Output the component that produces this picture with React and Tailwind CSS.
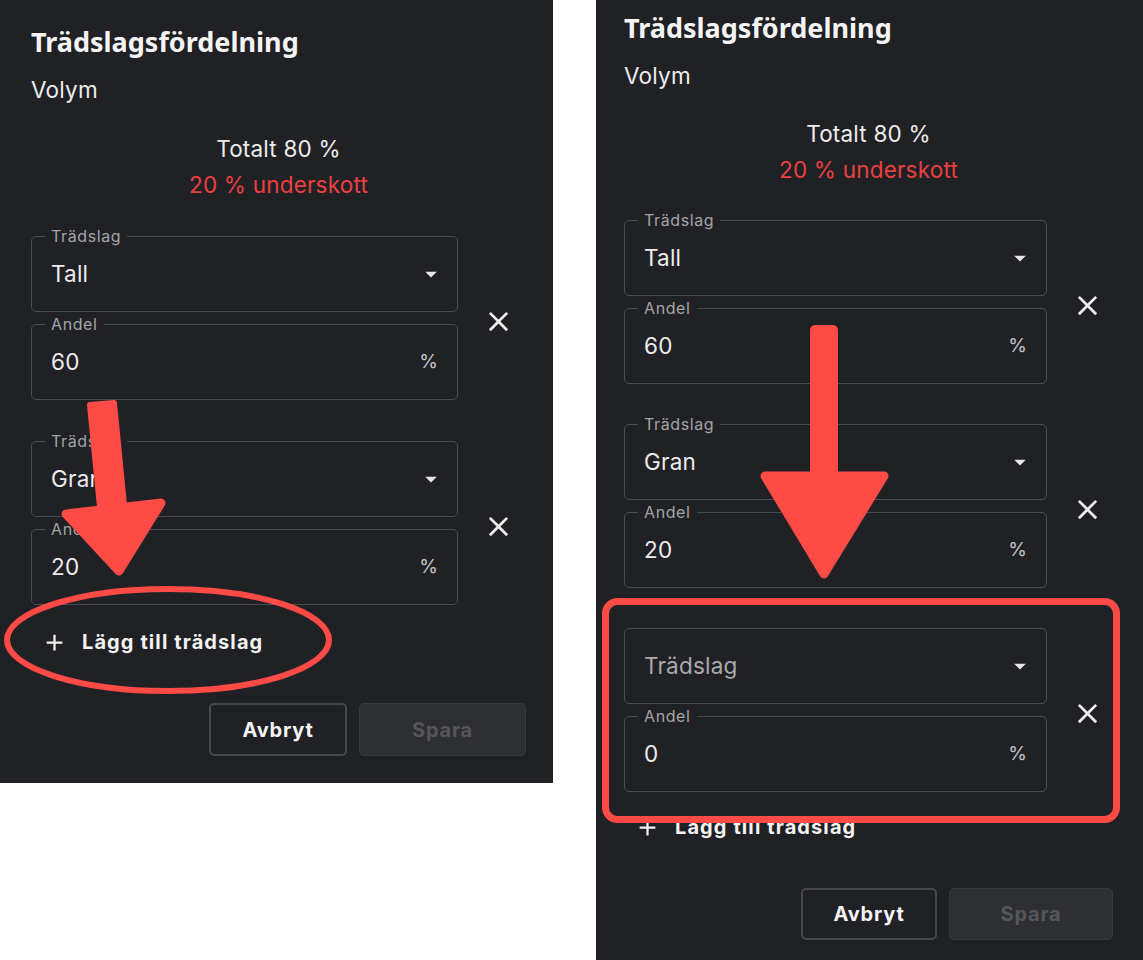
import React from "react";

const V = {
  left: {
    panel: "w-[553px] h-[783px] pl-[31px] pr-[27px] pt-[25px]",
    field: "w-[427px]",
    rows: "gap-[41px]",
    totalMt: "mt-[27px]",
    rowsMt: "mt-[33px]",
    addMt: "mt-[23px]",
    btnMt: "mt-[47px]",
    avbryt: "w-[138px] h-[53px]",
    spara: "w-[167px] h-[53px]",
  },
  right: {
    panel: "w-[547px] h-[960px] pl-[28px] pr-[30px] pt-[11px]",
    field: "w-[423px]",
    rows: "gap-[40px]",
    totalMt: "mt-[26px]",
    rowsMt: "mt-[32px]",
    addMt: "mt-[21px]",
    btnMt: "mt-[47px]",
    avbryt: "w-[136px] h-[52px]",
    spara: "w-[164px] h-[52px]",
  },
};

function DropIcon() {
  return (
    <svg viewBox="0 0 24 24" className="w-[28px] h-[28px] fill-[#e6e6e6]">
      <path d="M7 10l5 5 5-5z" />
    </svg>
  );
}

function CloseIcon() {
  return (
    <svg viewBox="0 0 24 24" className="w-[33px] h-[33px] fill-[#ececec]">
      <path d="M19 6.41 17.59 5 12 10.59 6.41 5 5 6.41 10.59 12 5 17.59 6.41 19 12 13.41 17.59 19 19 17.59 13.41 12z" />
    </svg>
  );
}

function AddIcon() {
  return (
    <svg viewBox="0 0 24 24" className="w-[27px] h-[27px] fill-[#f2f2f2]">
      <path d="M19 13h-6v6h-2v-6H5v-2h6V5h2v6h6v2z" />
    </svg>
  );
}

function Field({ label, children, right, w }) {
  return (
    <div className={`relative ${w} h-[76px] border border-[#4a4b50] rounded-[5px] flex items-center pl-[19px]`}>
      {label && (
        <span className="absolute -top-[12px] left-[13px] px-[6px] bg-[#202125] text-[16px] leading-[22px] tracking-[0.6px] text-[#a3a4a8]">
          {label}
        </span>
      )}
      <div className="flex-1 text-[22.5px] tracking-[0.2px] text-[#ececec]">{children}</div>
      {right}
    </div>
  );
}

function Row({ species, share, v }) {
  return (
    <div className="flex items-center">
      <div className="flex flex-col gap-[12px]">
        <Field
          w={v.field}
          label={species ? "Trädslag" : null}
          right={
            <div className="pr-[12px] flex items-center">
              <DropIcon />
            </div>
          }
        >
          {species ? species : <span className="text-[#a9aaae]">Trädslag</span>}
        </Field>
        <Field
          w={v.field}
          label="Andel"
          right={<span className="pr-[19px] text-[19px] text-[#c4c4c6]">%</span>}
        >
          {share}
        </Field>
      </div>
      <div className="ml-[24px] mt-[6px] flex items-center">
        <CloseIcon />
      </div>
    </div>
  );
}

function Panel({ variant, rows }) {
  const v = V[variant];
  return (
    <div className={`${v.panel} bg-[#202125] shrink-0 flex flex-col`}>
      <h1 className="text-[27px] leading-[34px] font-bold text-[#f4f4f4] font-['Noto_Sans',sans-serif]">
        Trädslagsfördelning
      </h1>
      <div className="mt-[17px] text-[22.5px] leading-[28px] tracking-[0.2px] text-[#ececec]">Volym</div>
      <div className={`${v.totalMt} text-center text-[22.5px] leading-[36px] tracking-[0.2px] text-[#ececec]`}>
        Totalt 80 %
      </div>
      <div className="text-center text-[22.5px] leading-[36px] tracking-[0.2px] text-[#ea4040]">
        20 % underskott
      </div>
      <div className={`${v.rowsMt} flex flex-col ${v.rows}`}>
        {rows.map((r, i) => (
          <Row key={i} species={r[0]} share={r[1]} v={v} />
        ))}
      </div>
      <div className={`${v.addMt} flex items-center pl-[10px] gap-[14px] text-[20px] leading-[28px] tracking-[1.1px] font-bold text-[#f2f2f2]`}>
        <AddIcon />
        <span>Lägg till trädslag</span>
      </div>
      <div className={`${v.btnMt} flex justify-end gap-[12px]`}>
        <button className={`${v.avbryt} border-2 border-[#47484c] rounded-[5px] text-[20px] tracking-[0.8px] font-bold text-[#f4f4f4] bg-[#202125]`}>
          Avbryt
        </button>
        <button className={`${v.spara} border border-[#38393d] rounded-[5px] text-[20px] tracking-[0.8px] font-bold text-[#55565a] bg-[#2e2f33]`}>
          Spara
        </button>
      </div>
    </div>
  );
}

export default function App() {
  return (
    <div className="relative w-[1143px] h-[960px] bg-white overflow-hidden font-['Inter',sans-serif]">
      <div className="flex items-start gap-[43px]">
        <Panel
          variant="left"
          rows={[
            ["Tall", "60"],
            ["Gran", "20"],
          ]}
        />
        <Panel
          variant="right"
          rows={[
            ["Tall", "60"],
            ["Gran", "20"],
            [null, "0"],
          ]}
        />
      </div>
      <svg
        className="absolute inset-0 pointer-events-none"
        width="1143"
        height="960"
        viewBox="0 0 1143 960"
      >
        <g fill="#fe4b46" stroke="#fe4b46" strokeLinejoin="round">
          <polygon points="90,405 114,403 124,505 100,507" strokeWidth="6" />
          <polygon points="66,514 161,503 119,571" strokeWidth="9" />
          <rect x="812" y="327" width="24" height="160" rx="3" strokeWidth="4" />
          <polygon points="765,476 884,476 824,574" strokeWidth="9" />
        </g>
        <ellipse cx="168" cy="640" rx="161" ry="51" fill="none" stroke="#fe4b46" strokeWidth="6" />
        <rect x="605.5" y="601.5" width="511" height="218" rx="12" fill="none" stroke="#fe4b46" strokeWidth="7" />
      </svg>
    </div>
  );
}
